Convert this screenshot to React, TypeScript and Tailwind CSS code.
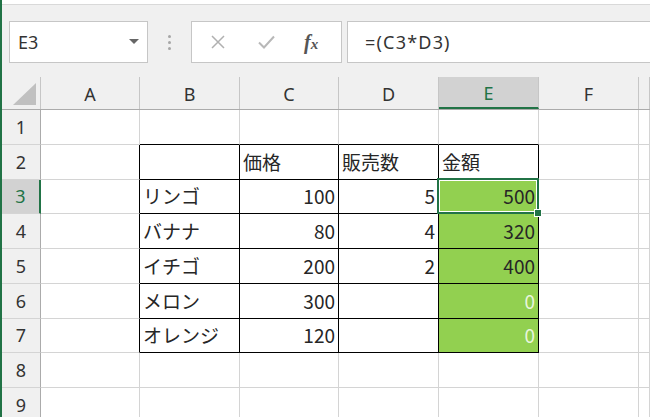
import React from "react";

type Cell = { v?: string; right?: boolean; light?: boolean };

const colLetters = ["A", "B", "C", "D", "E", "F", ""];

const rows: { h: string; cells: Cell[] }[] = [
  { h: "h-[35px]", cells: [{}, {}, {}, {}, {}, {}, {}] },
  { h: "h-[35px]", cells: [{}, {}, { v: "価格" }, { v: "販売数" }, { v: "金額" }, {}, {}] },
  { h: "h-[34px]", cells: [{}, { v: "リンゴ" }, { v: "100", right: true }, { v: "5", right: true }, { v: "500", right: true }, {}, {}] },
  { h: "h-[35px]", cells: [{}, { v: "バナナ" }, { v: "80", right: true }, { v: "4", right: true }, { v: "320", right: true }, {}, {}] },
  { h: "h-[35px]", cells: [{}, { v: "イチゴ" }, { v: "200", right: true }, { v: "2", right: true }, { v: "400", right: true }, {}, {}] },
  { h: "h-[35px]", cells: [{}, { v: "メロン" }, { v: "300", right: true }, {}, { v: "0", right: true, light: true }, {}, {}] },
  { h: "h-[34px]", cells: [{}, { v: "オレンジ" }, { v: "120", right: true }, {}, { v: "0", right: true, light: true }, {}, {}] },
  { h: "h-[35px]", cells: [{}, {}, {}, {}, {}, {}, {}] },
  { h: "h-[35px]", cells: [{}, {}, {}, {}, {}, {}, {}] },
];

const gridCols = "grid grid-cols-[39px_99px_100px_99px_100px_100px_100px_1fr]";

function cellBorder(r: number, c: number) {
  // r: 1-based row, c: 0 = A ... 6 = G
  const inTable = r >= 2 && r <= 7 && c >= 1 && c <= 4;
  const rightBlack = (inTable || (c === 0 && r >= 2 && r <= 7)) ? "border-r-black" : "border-r-[#d4d4d4]";
  const bottomBlack = (inTable || (r === 1 && c >= 1 && c <= 4)) ? "border-b-black" : "border-b-[#d4d4d4]";
  return `${rightBlack} ${bottomBlack}`;
}

export default function App() {
  return (
    <div className="w-[650px] h-[417px] overflow-hidden bg-white border-l-2 border-[#217346] font-['Noto_Sans',sans-serif] text-[#262626]">
      {/* formula bar */}
      <div className="h-[5px] bg-white border-b border-[#d9d9d9]" />
      <div className="bg-[#f0f0f0] pt-[16px] pb-[14px] flex items-center pl-[7px]">
        <div className="w-[139px] h-[42px] bg-white border border-[#c6c6c6] flex items-center justify-between pl-[8px] pr-[8px]">
          <span className="text-[18px] text-[#333]">E3</span>
          <svg width="10" height="6" viewBox="0 0 10 6">
            <path d="M0 0 L10 0 L5 5 Z" fill="#666" />
          </svg>
        </div>
        <div className="w-[43px] flex flex-col items-center gap-[3px]">
          <span className="w-[3px] h-[3px] rounded-full bg-[#a6a6a6]" />
          <span className="w-[3px] h-[3px] rounded-full bg-[#a6a6a6]" />
          <span className="w-[3px] h-[3px] rounded-full bg-[#a6a6a6]" />
        </div>
        <div className="w-[151px] h-[42px] bg-white border border-[#c6c6c6] flex items-center">
          <svg className="ml-[19px]" width="14" height="14" viewBox="0 0 14 14">
            <path d="M1 1 L13 13 M13 1 L1 13" stroke="#b0b0b0" strokeWidth="1.5" />
          </svg>
          <svg className="ml-[33px]" width="17" height="14" viewBox="0 0 17 14">
            <path d="M1 7.5 L6 12.5 L16 1.5" stroke="#b8b8b8" strokeWidth="2" fill="none" />
          </svg>
          <span className="ml-[29px] text-[20px] leading-none italic font-bold text-[#555] font-['Liberation_Serif',serif]">
            f<span className="text-[15px]">x</span>
          </span>
        </div>
        <div className="ml-[5px] flex-1 h-[42px] bg-white border border-[#c6c6c6] border-r-0 flex items-center pl-[17px]">
          <span className="text-[18px] tracking-[1.2px] text-[#333]">=(C3*D3)</span>
        </div>
      </div>

      {/* column headers */}
      <div className={`${gridCols} h-[33px] bg-[#f0f0f0] border-b border-[#ababab]`}>
        <div className="border-r border-[#c6c6c6] flex items-end justify-end pr-[4px] pb-[4px]">
          <svg width="23" height="22" viewBox="0 0 23 22">
            <path d="M23 0 L23 22 L0 22 Z" fill="#c0c0c0" />
          </svg>
        </div>
        {colLetters.map((l, i) =>
          l === "E" ? (
            <div
              key={i}
              className="bg-[#d2d2d2] border-r border-[#c6c6c6] border-b-2 border-b-[#217346] flex items-center justify-center pt-[3px] text-[18px] text-[#217346]"
            >
              {l}
            </div>
          ) : (
            <div
              key={i}
              className="border-r border-[#c6c6c6] flex items-center justify-center pt-[3px] text-[18px] text-[#333]"
            >
              {l}
            </div>
          )
        )}
      </div>

      {/* rows */}
      {rows.map((row, ri) => {
        const r = ri + 1;
        const selRow = r === 3;
        return (
          <div key={r} className={`${gridCols} ${row.h}`}>
            <div
              className={
                selRow
                  ? "bg-[#d2d2d2] border-r-2 border-r-[#217346] border-b border-b-[#d4d4d4] flex items-center justify-center text-[18px] text-[#217346]"
                  : "bg-[#f0f0f0] border-r border-r-[#ababab] border-b border-b-[#d4d4d4] flex items-center justify-center text-[18px] text-[#333]"
              }
            >
              {r}
            </div>
            {row.cells.map((cell, c) => {
              const green = c === 4 && r >= 3 && r <= 7;
              return (
                <div
                  key={c}
                  className={`relative border-r border-b ${cellBorder(r, c)} ${
                    green ? "bg-[#92d050]" : ""
                  } flex items-center ${cell.right ? "justify-end pr-[3px]" : "justify-start pl-[3px]"} font-['Noto_Sans_CJK_JP',sans-serif] text-[19px] ${
                    cell.light ? "text-[#e8f5dc]" : "text-[#262626]"
                  }`}
                >
                  {cell.v}
                  {r === 3 && c === 4 && (
                    <div className="absolute -left-[2px] -top-[2px] -right-[1px] -bottom-[1px] border-2 border-[#217346] z-10">
                      <div className="absolute inset-0 border border-white" />
                      <div className="absolute -right-[5px] -bottom-[5px] w-[8px] h-[8px] bg-[#217346] border border-white" />
                    </div>
                  )}
                </div>
              );
            })}
          </div>
        );
      })}
    </div>
  );
}
